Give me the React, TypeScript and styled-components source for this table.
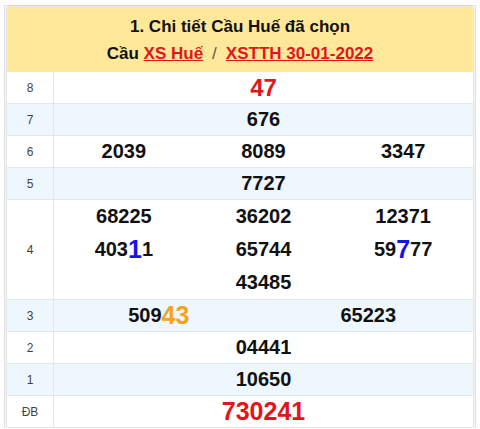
import React from "react";
import styled, { createGlobalStyle } from "styled-components";

const Global = createGlobalStyle`
  html, body { margin: 0; padding: 0; background: #fff; }
  body { font-family: "Liberation Sans", Arial, sans-serif; }
`;

const Outer = styled.div`
  padding: 5px 4px 0 4px;
`;

const Frame = styled.div`
  border: 1px solid #e2e2e2;
  border-bottom: none;
  padding: 1px 2px 0 2px;
`;

const Card = styled.div`
  box-shadow: 0 0 3px rgba(0, 0, 0, 0.25);
  background: #fff;
`;

const Header = styled.div`
  background: #ffe899;
  text-align: center;
  padding: 6px 0 5px;
`;

const Title = styled.div`
  font-size: 17px;
  font-weight: bold;
  color: #111;
  line-height: 27px;
`;

const Sub = styled.div`
  font-size: 17px;
  font-weight: bold;
  color: #111;
  line-height: 27px;
`;

const Link = styled.a`
  color: #e3141b;
  text-decoration: underline;
`;

const Sep = styled.span`
  color: #555;
  font-weight: normal;
  margin: 0 9px;
`;

const Table = styled.div`
  display: grid;
  grid-template-columns: 47px 1fr;
`;

const Label = styled.div<{ $alt?: boolean }>`
  background: ${(p) => (p.$alt ? "#eef6fe" : "#fff")};
  border-right: 1px solid #e2e7ee;
  border-bottom: 1px solid #e2e7ee;
  display: flex;
  align-items: center;
  justify-content: center;
  font-size: 12px;
  color: #444;
`;

const Values = styled.div<{ $alt?: boolean; $cols: number }>`
  background: ${(p) => (p.$alt ? "#eef6fe" : "#fff")};
  border-bottom: 1px solid #e2e7ee;
  display: grid;
  grid-template-columns: repeat(${(p) => p.$cols}, 1fr);
`;

const Num = styled.div<{ $size?: number; $color?: string; $h: number }>`
  height: ${(p) => p.$h}px;
  display: flex;
  align-items: center;
  justify-content: center;
  font-size: ${(p) => p.$size ?? 20}px;
  font-weight: bold;
  color: ${(p) => p.$color ?? "#111"};
`;

const Hi = styled.span<{ $color: string }>`
  color: ${(p) => p.$color};
  font-size: 25px;
`;

type Row = { label: string; cols: number; items: React.ReactNode[]; size?: number; color?: string; h?: number };

const rows: Row[] = [
  { label: "8", cols: 1, items: ["47"], size: 24, color: "#e3141b" },
  { label: "7", cols: 1, items: ["676"] },
  { label: "6", cols: 3, items: ["2039", "8089", "3347"] },
  { label: "5", cols: 1, items: ["7727"] },
  {
    label: "4",
    cols: 3,
    h: 33,
    items: [
      "68225",
      "36202",
      "12371",
      <>403<Hi $color="#1414e6">1</Hi>1</>,
      "65744",
      <>59<Hi $color="#1414e6">7</Hi>77</>,
      "",
      "43485",
      "",
    ],
  },
  { label: "3", cols: 2, items: [<>509<Hi $color="#f7a21a">43</Hi></>, "65223"] },
  { label: "2", cols: 1, items: ["04441"] },
  { label: "1", cols: 1, items: ["10650"] },
  { label: "ĐB", cols: 1, items: ["730241"], size: 25, color: "#e3141b" },
];

export default function App() {
  return (
    <Outer>
      <Global />
      <Frame>
        <Card>
          <Header>
            <Title>1. Chi tiết Cầu Huế đã chọn</Title>
            <Sub>
              Cầu <Link>XS Huế</Link>
              <Sep>/</Sep>
              <Link>XSTTH 30-01-2022</Link>
            </Sub>
          </Header>
          <Table>
            {rows.map((r, i) => (
              <React.Fragment key={r.label}>
                <Label $alt={i % 2 === 1}>{r.label}</Label>
                <Values $alt={i % 2 === 1} $cols={r.cols}>
                  {r.items.map((it, j) => (
                    <Num key={j} $size={r.size} $color={r.color} $h={r.h ?? 31}>
                      {it}
                    </Num>
                  ))}
                </Values>
              </React.Fragment>
            ))}
          </Table>
        </Card>
      </Frame>
    </Outer>
  );
}
